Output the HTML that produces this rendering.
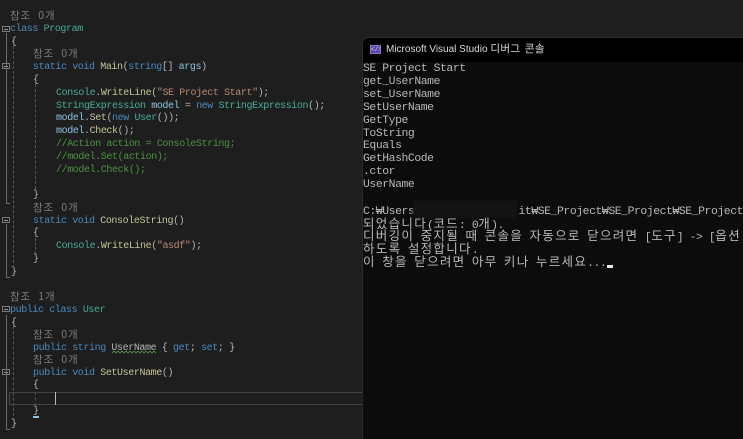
<!DOCTYPE html>
<html lang="ko"><head><meta charset="utf-8">
<style>
html,body{margin:0;padding:0;background:#1e1e1e}
#r{position:relative;width:743px;height:439px;overflow:hidden;background:#1e1e1e}
#e{position:absolute;left:0;top:0;width:743px;height:439px;filter:blur(.3px)}
.l{position:absolute;height:13px;margin-top:1px;font:10px/13px "Liberation Mono","Noto Sans CJK KR",monospace;letter-spacing:-.4px;white-space:pre;color:#b4b4b4}
.r{position:absolute;height:13px;font:10.5px/13px "Noto Sans CJK KR","Liberation Sans",sans-serif;letter-spacing:.85px;word-spacing:3.5px;color:#7c7c7c;white-space:pre}
.b{color:#4b88bd}.t{color:#46ab98}.m{color:#c4c498}.s{color:#b98a74}.c{color:#4c9142}.v{color:#8cc4e0}
.fold{position:absolute;left:2px;width:6px;height:4px;border:1px solid #7a7a7a}
.fold:after{content:"";position:absolute;left:1px;top:2px;width:4px;height:1px;background:#999}
.g{position:absolute;width:0;border-left:1px dashed #555}
.v1{position:absolute;left:6px;width:1px;background:#6a6a6a}
.h1{position:absolute;left:6px;width:4px;height:1px;background:#6a6a6a}
#con{position:absolute;left:363px;top:38px;width:380px;height:401px;background:#0c0c0c;border-radius:6px 0 0 0;box-shadow:0 0 0 1px #2a2a2a}
#tb{position:absolute;left:0;top:0;width:380px;height:24px;background:#000;border-radius:6px 0 0 0}
#tt{position:absolute;left:23px;top:4px;font:10px/15px "Liberation Sans","Noto Sans CJK KR",sans-serif;color:#dcdcdc;white-space:pre}
#tt span{font-size:10.5px;letter-spacing:.4px;word-spacing:1px}
#ic{position:absolute;left:7px;top:7px;width:11px;height:9px;background:#5d45a8;border:1px solid #8878c4;box-sizing:border-box;font:6px/7px "Liberation Mono",monospace;color:#ddd;text-align:center;overflow:hidden}
.o{position:absolute;left:0;height:13px;font:11.4px/13px "Liberation Mono",monospace;letter-spacing:-.42px;color:#b8b8b8;white-space:pre;filter:blur(.25px)}
.o span{font:12.5px/13px "Noto Sans CJK KR",sans-serif;letter-spacing:1.3px}
</style></head><body><div id="r">
<div id="e">
<div class="r" style="left:10px;top:9px">참조 0개</div>
<div class="l" style="left:10px;top:22px"><span class="b">class</span> <span class="t">Program</span></div>
<div class="l" style="left:11px;top:35px">{</div>
<div class="r" style="left:33px;top:47px">참조 0개</div>
<div class="l" style="left:33px;top:60px"><span class="b">static void</span> <span class="m">Main</span>(<span class="b">string</span>[] <span class="v">args</span>)</div>
<div class="l" style="left:33px;top:73px">{</div>
<div class="l" style="left:56px;top:86px"><span class="t">Console</span>.<span class="m">WriteLine</span>(<span class="s">"SE Project Start"</span>);</div>
<div class="l" style="left:56px;top:99px"><span class="t">StringExpression</span> <span class="v">model</span> = <span class="b">new</span> <span class="t">StringExpression</span>();</div>
<div class="l" style="left:56px;top:111px"><span class="v">model</span>.<span class="m">Set</span>(<span class="b">new</span> <span class="t">User</span>());</div>
<div class="l" style="left:56px;top:124px"><span class="v">model</span>.<span class="m">Check</span>();</div>
<div class="l c" style="left:56px;top:137px">//Action action = ConsoleString;</div>
<div class="l c" style="left:56px;top:150px">//model.Set(action);</div>
<div class="l c" style="left:56px;top:163px">//model.Check();</div>
<div class="l" style="left:33px;top:188px">}</div>
<div class="r" style="left:33px;top:201px">참조 0개</div>
<div class="l" style="left:33px;top:214px"><span class="b">static void</span> <span class="m">ConsoleString</span>()</div>
<div class="l" style="left:33px;top:226px">{</div>
<div class="l" style="left:56px;top:239px"><span class="t">Console</span>.<span class="m">WriteLine</span>(<span class="s">"asdf"</span>);</div>
<div class="l" style="left:33px;top:252px">}</div>
<div class="l" style="left:11px;top:265px">}</div>
<div class="r" style="left:10px;top:290px">참조 1개</div>
<div class="l" style="left:10px;top:303px"><span class="b">public class</span> <span class="t">User</span></div>
<div class="l" style="left:11px;top:316px">{</div>
<div class="r" style="left:33px;top:328px">참조 0개</div>
<div class="l" style="left:33px;top:341px"><span class="b">public string</span> UserName { <span class="b">get</span>; <span class="b">set</span>; }</div>
<div class="r" style="left:33px;top:353px">참조 0개</div>
<div class="l" style="left:33px;top:366px"><span class="b">public void</span> <span class="m">SetUserName</span>()</div>
<div class="l" style="left:33px;top:378px">{</div>
<div class="l" style="left:33px;top:404px">}</div>
<div class="l" style="left:11px;top:417px">}</div>

<div class="fold" style="top:26px"></div>
<div class="fold" style="top:63px"></div>
<div class="fold" style="top:217px"></div>
<div class="fold" style="top:306px"></div>
<div class="fold" style="top:369px"></div>
<div class="v1" style="top:33px;height:170px"></div><div class="h1" style="top:203px"></div>
<div class="v1" style="top:224px;height:53px"></div><div class="h1" style="top:277px"></div>
<div class="v1" style="top:315px;height:114px"></div><div class="h1" style="top:429px"></div>
<div class="g" style="left:13px;top:46px;height:222px"></div>
<div class="g" style="left:35px;top:84px;height:105px"></div>
<div class="g" style="left:35px;top:238px;height:16px"></div>
<div class="g" style="left:13px;top:326px;height:90px"></div>
<div class="g" style="left:35px;top:392px;height:14px"></div>
<div style="position:absolute;left:9px;top:392px;width:354px;height:11px;border:1px solid #454545;box-sizing:content-box"></div>
<div style="position:absolute;left:55px;top:392px;width:1px;height:13px;background:#b8b8b8"></div>
<div style="position:absolute;left:33px;top:416px;width:6px;height:2px;background:#8cc4dc"></div>
<svg style="position:absolute;left:112px;top:351px" width="45" height="3"><path d="M0 2L2 0L4 2L6 0L8 2L10 0L12 2L14 0L16 2L18 0L20 2L22 0L24 2L26 0L28 2L30 0L32 2L34 0L36 2L38 0L40 2L42 0L44 2" fill="none" stroke="#5f9a4a" stroke-width=".8"/></svg>
</div>
<div id="con">
<div id="tb"><div id="ic">&lt;/&gt;</div><div id="tt">Microsoft Visual Studio <span>디버그 콘솔</span></div></div>
<div class="o" style="top:25px">SE Project Start</div>
<div class="o" style="top:38px">get_UserName</div>
<div class="o" style="top:51px">set_UserName</div>
<div class="o" style="top:64px">SetUserName</div>
<div class="o" style="top:77px">GetType</div>
<div class="o" style="top:90px">ToString</div>
<div class="o" style="top:102px">Equals</div>
<div class="o" style="top:115px">GetHashCode</div>
<div class="o" style="top:128px">.ctor</div>
<div class="o" style="top:141px">UserName</div>
<div class="o" style="top:168px">C:₩Users</div>
<div class="o" style="top:168px;left:155.5px">it₩SE_Project₩SE_Project₩SE_Project₩</div>
<div style="position:absolute;left:50px;top:162px;width:104px;height:18px;background:#141414;filter:blur(1px)"></div>
<div class="o" style="top:178px"><span>되었습니다</span>(<span>코드</span>: 0<span>개</span>).</div>
<div class="o" style="top:190px"><span>디버깅이</span> <span>중지될</span> <span>때</span> <span>콘솔을</span> <span>자동으로</span> <span>닫으려면</span> [<span>도구</span>] -&gt; [<span>옵션</span></div>
<div class="o" style="top:203px"><span>하도록</span> <span>설정합니다</span>.</div>
<div class="o" style="top:216px"><span>이</span> <span>창을</span> <span>닫으려면</span> <span>아무</span> <span>키나</span> <span>누르세요</span>...</div>
<div style="position:absolute;left:244px;top:227px;width:6px;height:2.5px;background:#e8e8e8"></div>
</div>
</div></body></html>
